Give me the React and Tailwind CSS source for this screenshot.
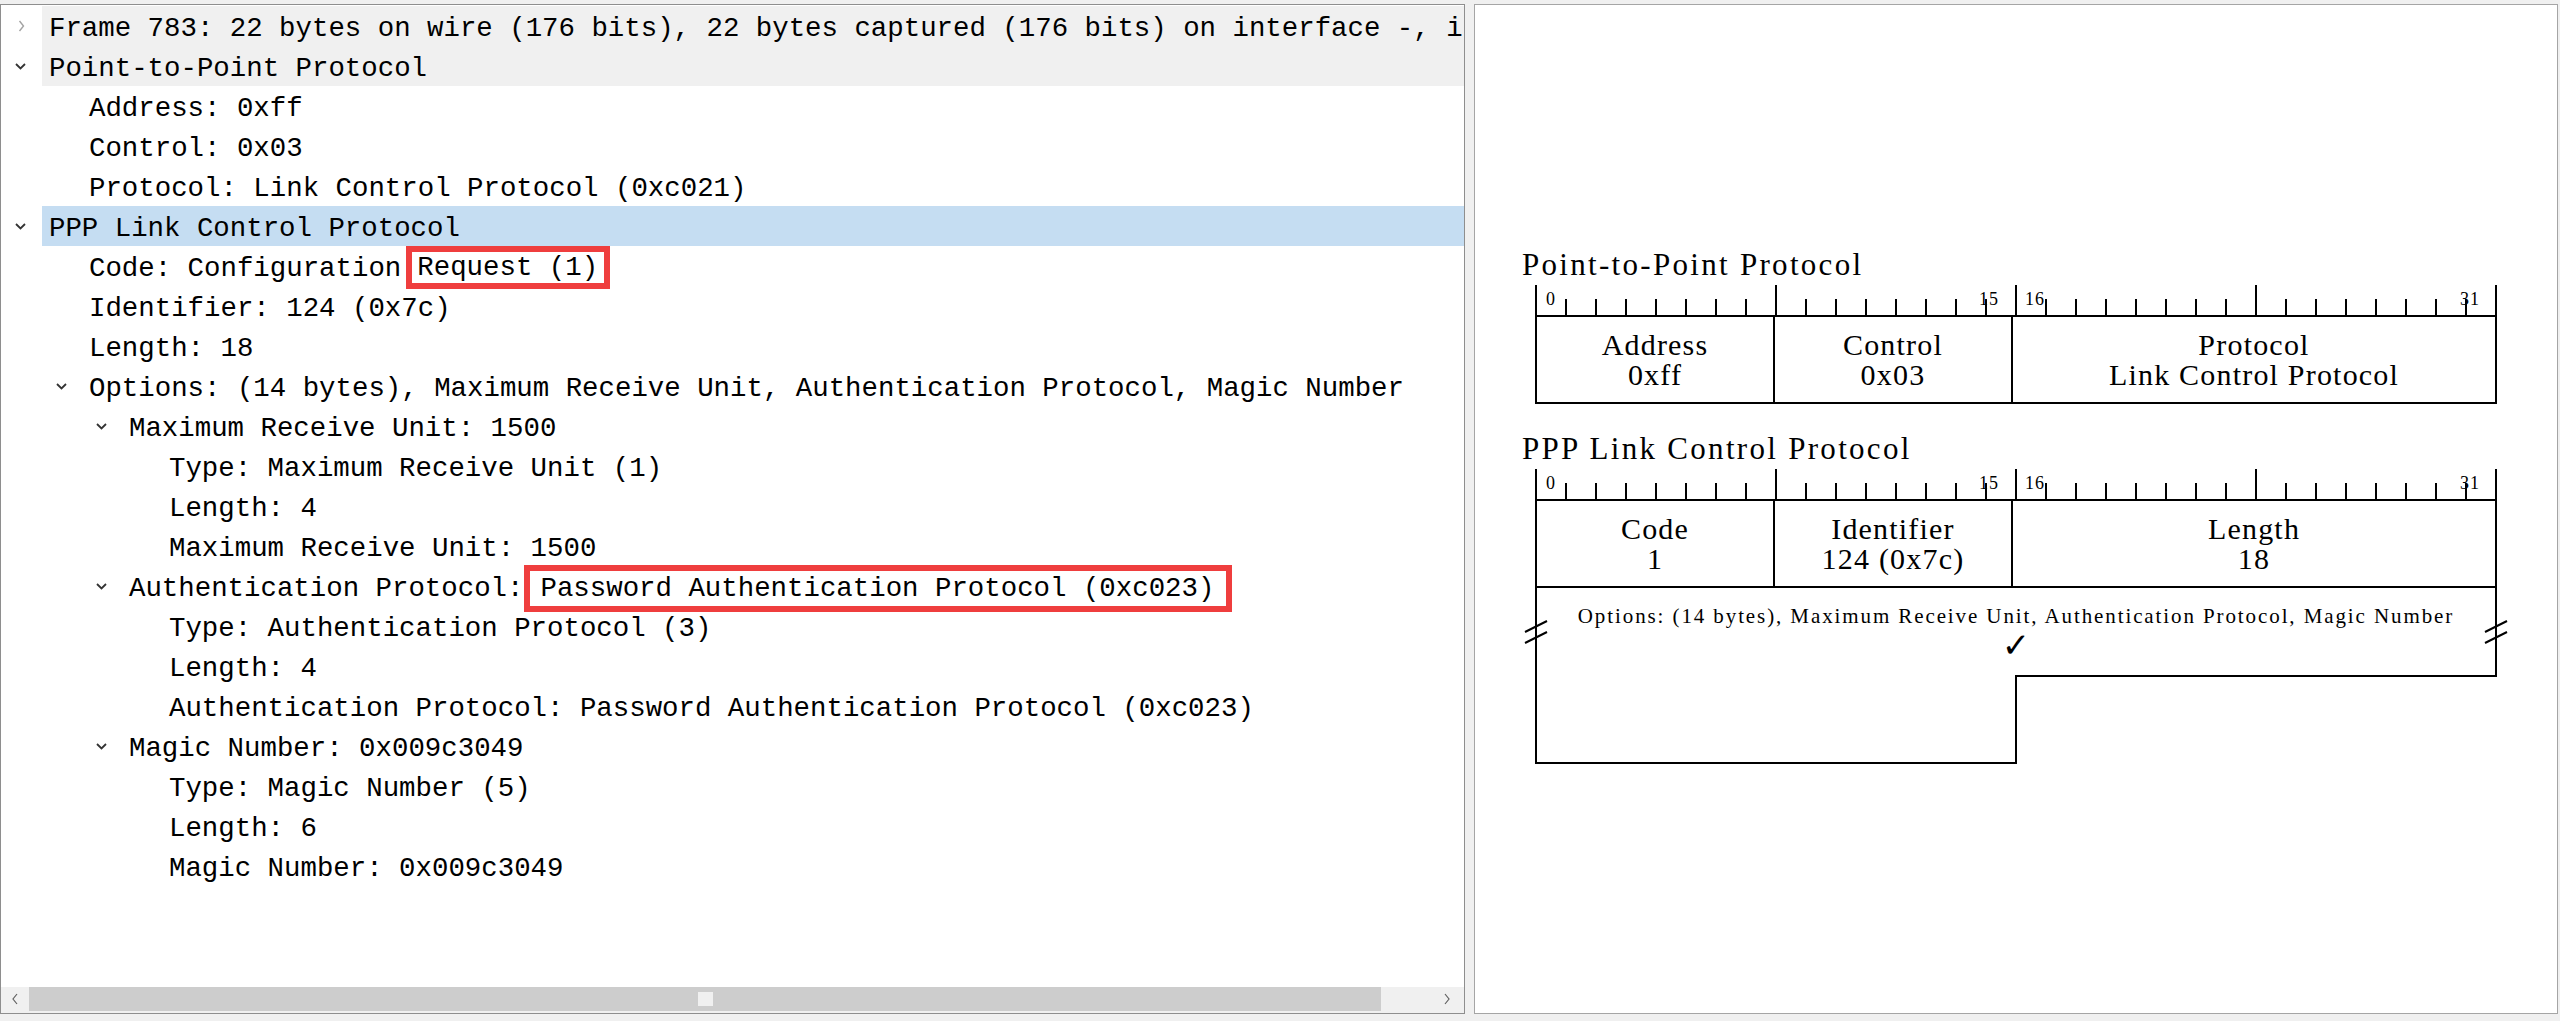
import React from 'react';

const indent = {
  0: 'pl-[7px]',
  1: 'pl-[7px]',
  2: 'pl-[47px]',
  3: 'pl-[87px]',
};

const Down = () => (
  <svg width="11" height="7" viewBox="0 0 11 7" className="block">
    <polyline points="1,1 5.5,5.5 10,1" fill="none" stroke="#333" strokeWidth="1.8" />
  </svg>
);

const Right = () => (
  <svg width="7" height="12" viewBox="0 0 7 12" className="ml-[3px] block">
    <polyline points="1.5,1 5.5,6 1.5,11" fill="none" stroke="#a3a3a3" strokeWidth="1.4" />
  </svg>
);

function Row({ level, arrow, bg = '', children }) {
  return (
    <div className="flex h-[40px]">
      <div className="flex w-[41px] shrink-0 items-center pl-[14px]">{level === 0 && arrow}</div>
      <div className={`flex flex-1 items-center ${bg} ${indent[level]}`}>
        {level > 0 && <div className="flex w-[40px] shrink-0 items-center pl-[7px]">{arrow}</div>}
        <div className="flex h-full items-center whitespace-pre pt-[5px]">{children}</div>
      </div>
    </div>
  );
}

function TreePane() {
  return (
    <div className="flex h-[1010px] w-[1465px] shrink-0 flex-col overflow-hidden border border-[#8e8e8e] bg-white font-['Liberation_Mono','DejaVu_Sans_Mono',monospace] text-[27.4px] leading-[35px] text-black">
      <div className="flex-1 overflow-hidden pt-[1px]">
        <Row level={0} arrow={<Right />} bg="bg-[#f0f0f0]">
          Frame 783: 22 bytes on wire (176 bits), 22 bytes captured (176 bits) on interface -, i
        </Row>
        <Row level={0} arrow={<Down />} bg="bg-[#f0f0f0]">Point-to-Point Protocol</Row>
        <Row level={1}>Address: 0xff</Row>
        <Row level={1}>Control: 0x03</Row>
        <Row level={1}>Protocol: Link Control Protocol (0xc021)</Row>
        <Row level={0} arrow={<Down />} bg="bg-[#c5ddf2]">PPP Link Control Protocol</Row>
        <Row level={1}>
          Code: Configuration
          <span className="ml-[5px] mt-[-2px] flex h-[43px] items-center border-[6px] border-[#ef3e3e] pl-[5px] pr-[6px]">
            Request (1)
          </span>
        </Row>
        <Row level={1}>Identifier: 124 (0x7c)</Row>
        <Row level={1}>Length: 18</Row>
        <Row level={1} arrow={<Down />}>
          Options: (14 bytes), Maximum Receive Unit, Authentication Protocol, Magic Number
        </Row>
        <Row level={2} arrow={<Down />}>Maximum Receive Unit: 1500</Row>
        <Row level={3}>Type: Maximum Receive Unit (1)</Row>
        <Row level={3}>Length: 4</Row>
        <Row level={3}>Maximum Receive Unit: 1500</Row>
        <Row level={2} arrow={<Down />}>
          Authentication Protocol:
          <span className="mt-0 flex h-[47px] items-center border-[6px] border-[#ef3e3e] pl-[11px] pr-[12px]">
            Password Authentication Protocol (0xc023)
          </span>
        </Row>
        <Row level={3}>Type: Authentication Protocol (3)</Row>
        <Row level={3}>Length: 4</Row>
        <Row level={3}>Authentication Protocol: Password Authentication Protocol (0xc023)</Row>
        <Row level={2} arrow={<Down />}>Magic Number: 0x009c3049</Row>
        <Row level={3}>Type: Magic Number (5)</Row>
        <Row level={3}>Length: 6</Row>
        <Row level={3}>Magic Number: 0x009c3049</Row>
      </div>

      {/* horizontal scrollbar */}
      <div className="flex h-[26px] shrink-0 bg-[#f0f0f0]">
        <div className="flex h-[24px] w-[28px] items-center justify-center">
          <svg width="6" height="12" viewBox="0 0 6 12">
            <polyline points="5,1 1,6 5,11" fill="none" stroke="#606060" strokeWidth="1.2" />
          </svg>
        </div>
        <div className="flex-1">
          <div className="flex h-[24px] w-[1352px] items-center justify-center bg-[#cdcdcd]">
            <div className="h-[14px] w-[15px] bg-[#f0f0f0]" />
          </div>
        </div>
        <div className="flex h-[24px] w-[34px] items-center justify-center">
          <svg width="6" height="12" viewBox="0 0 6 12">
            <polyline points="1,1 5,6 1,11" fill="none" stroke="#606060" strokeWidth="1.2" />
          </svg>
        </div>
      </div>
    </div>
  );
}

function Ruler() {
  const ticks = Array.from({ length: 33 }, (_, i) => i);
  return (
    <div className="relative h-[30px] w-[962px] text-[18px] leading-[18px]">
      <svg width="962" height="30" className="block">
        {ticks.map((i) => (
          <line
            key={i}
            x1={1 + i * 30}
            x2={1 + i * 30}
            y1={i % 8 === 0 ? 0 : 14}
            y2={30}
            stroke="#000"
            strokeWidth="2"
          />
        ))}
      </svg>
      <span className="absolute left-[11px] top-[5px]">0</span>
      <span className="absolute left-[444px] top-[5px] tracking-[1px]">15</span>
      <span className="absolute left-[490px] top-[5px] tracking-[1px]">16</span>
      <span className="absolute left-[925px] top-[5px] tracking-[1px]">31</span>
    </div>
  );
}

function Cell({ width, top, bottom }) {
  return (
    <div
      className={`flex flex-col items-center justify-center text-[30px] leading-[30px] tracking-[1.2px] ${width}`}
    >
      <div>{top}</div>
      <div>{bottom}</div>
    </div>
  );
}

function Section({ title, cells, className = '', children }) {
  return (
    <div className={className}>
      <div className="text-[31px] leading-[30px] tracking-[2.3px]">{title}</div>
      <div className="ml-[13px] mt-[5px]">
        <Ruler />
        <div className="flex h-[89px] w-[962px] border-2 border-black">
          <Cell width="w-[238px] border-r-2 border-black" top={cells[0][0]} bottom={cells[0][1]} />
          <Cell width="w-[238px] border-r-2 border-black" top={cells[1][0]} bottom={cells[1][1]} />
          <Cell width="flex-1" top={cells[2][0]} bottom={cells[2][1]} />
        </div>
        {children}
      </div>
    </div>
  );
}

const BreakMark = ({ className }) => (
  <svg width="26" height="28" viewBox="0 0 26 28" className={`absolute top-[30px] ${className}`}>
    <line x1="2" y1="14" x2="24" y2="3" stroke="#000" strokeWidth="2" />
    <line x1="2" y1="25" x2="24" y2="14" stroke="#000" strokeWidth="2" />
  </svg>
);

function DiagramPane() {
  return (
    <div className="ml-[9px] h-[1010px] w-[1084px] shrink-0 border border-[#a5a5a5] bg-white pl-[47px] pt-[245px] font-['Liberation_Serif','DejaVu_Serif',serif] text-black">
      <Section
        title="Point-to-Point Protocol"
        cells={[
          ['Address', '0xff'],
          ['Control', '0x03'],
          ['Protocol', 'Link Control Protocol'],
        ]}
      />
      <Section
        className="mt-[30px]"
        title="PPP Link Control Protocol"
        cells={[
          ['Code', '1'],
          ['Identifier', '124 (0x7c)'],
          ['Length', '18'],
        ]}
      >
        {/* variable-length options field */}
        <div className="relative h-[87px] w-[962px] border-x-2 border-black pt-[18px]">
          <div className="text-center text-[21px] leading-[21px] tracking-[1.9px]">
            Options: (14 bytes), Maximum Receive Unit, Authentication Protocol, Magic Number
          </div>
          <div className="mt-[1px] text-center font-['DejaVu_Sans',sans-serif] text-[34px] font-bold leading-[34px]">
            ✓
          </div>
          <BreakMark className="left-[-14px]" />
          <BreakMark className="right-[-14px]" />
        </div>
        <div className="flex w-[962px]">
          <div className="h-[89px] w-[482px] border-x-2 border-b-2 border-black" />
          <div className="w-[480px] border-t-2 border-black" />
        </div>
      </Section>
    </div>
  );
}

export default function App() {
  return (
    <div className="flex h-[1021px] w-[2560px] overflow-hidden bg-[#f0f0f0] pt-[4px]">
      <TreePane />
      <DiagramPane />
    </div>
  );
}
